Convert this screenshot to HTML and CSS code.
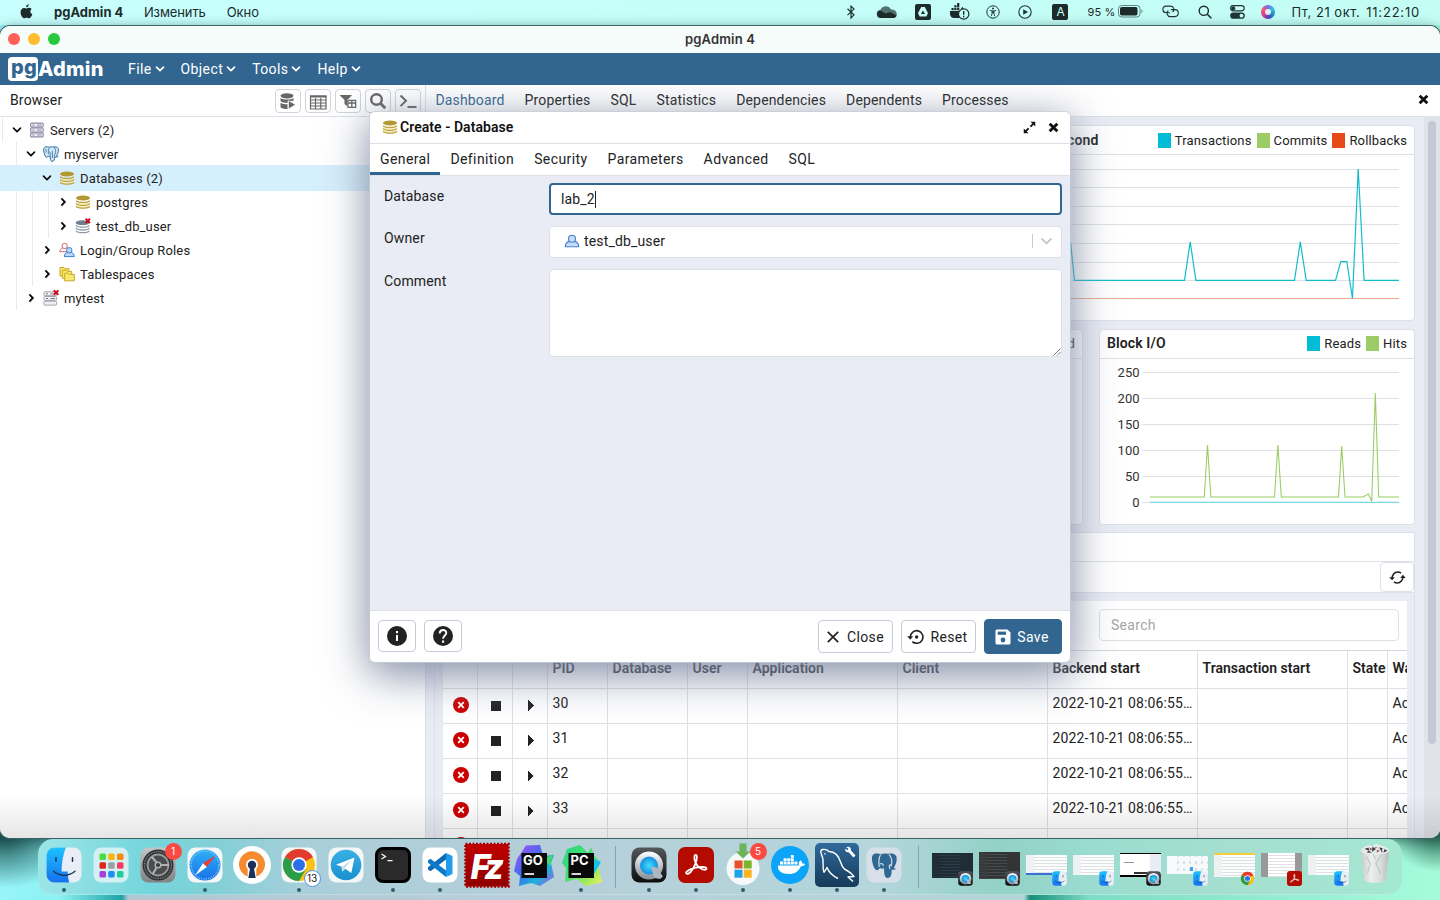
FILE: index.html
```html
<!DOCTYPE html>
<html lang="ru">
<head>
<meta charset="utf-8">
<title>pgAdmin 4</title>
<link rel="stylesheet" href="styles.css">
</head>
<body>
<svg class="defs" width="0" height="0">
  <defs>
    <linearGradient id="g-finder" x1="0" y1="0" x2="0" y2="1"><stop offset="0" stop-color="#1cc3ff"/><stop offset="1" stop-color="#1670f0"/></linearGradient>
    <linearGradient id="g-blue" x1="0" y1="0" x2="0" y2="1"><stop offset="0" stop-color="#2fb0f5"/><stop offset="1" stop-color="#1770e8"/></linearGradient>
    <linearGradient id="g-gray" x1="0" y1="0" x2="0" y2="1"><stop offset="0" stop-color="#c4c6c8"/><stop offset="1" stop-color="#7f8183"/></linearGradient>
    <linearGradient id="g-tg" x1="0" y1="0" x2="0" y2="1"><stop offset="0" stop-color="#38b0e3"/><stop offset="1" stop-color="#1b90cf"/></linearGradient>
    <linearGradient id="g-dark" x1="0" y1="0" x2="0" y2="1"><stop offset="0" stop-color="#55585c"/><stop offset="1" stop-color="#0c0c0e"/></linearGradient>
    <linearGradient id="g-sql" x1="0" y1="0" x2="0" y2="1"><stop offset="0" stop-color="#2f6a9c"/><stop offset="1" stop-color="#173a58"/></linearGradient>
    <linearGradient id="g-go" x1="0" y1="0" x2="1" y2="1"><stop offset="0" stop-color="#b74af7"/><stop offset=".45" stop-color="#3b6cf0"/><stop offset=".7" stop-color="#18b5d8"/><stop offset="1" stop-color="#b34de8"/></linearGradient>
    <linearGradient id="g-pc" x1="0" y1="0" x2="1" y2="1"><stop offset="0" stop-color="#20d788"/><stop offset=".5" stop-color="#4fe06a"/><stop offset="1" stop-color="#f6f550"/></linearGradient>
    <linearGradient id="g-silver" x1="0" y1="0" x2="0" y2="1"><stop offset="0" stop-color="#f4f6f8"/><stop offset="1" stop-color="#8f979f"/></linearGradient>
    <linearGradient id="g-fz" x1="0" y1="0" x2="0" y2="1"><stop offset="0" stop-color="#c20000"/><stop offset="1" stop-color="#8e0000"/></linearGradient>
    <radialGradient id="g-lens"><stop offset="0" stop-color="#3ee0ff"/><stop offset="1" stop-color="#0b76d8"/></radialGradient>
    <linearGradient id="g-trash" x1="0" y1="0" x2="1" y2="0"><stop offset="0" stop-color="#c6cac9"/><stop offset=".35" stop-color="#ecefee"/><stop offset=".7" stop-color="#d9dddb"/><stop offset="1" stop-color="#b7bcba"/></linearGradient>

    <symbol id="down" viewBox="0 0 10 10"><path d="M1.5 3.2 5 6.7l3.500-3.500" fill="none" stroke="currentColor" stroke-width="1.700" stroke-linecap="round" stroke-linejoin="round"/></symbol>
    <symbol id="right" viewBox="0 0 10 10"><path d="M3.400 1.400 6.800 5 3.400 8.600" fill="none" stroke="currentColor" stroke-width="1.900"/></symbol>
    <symbol id="cross" viewBox="0 0 10 10"><path d="M1.500 1.500l7 7M8.500 1.500l-7 7" fill="none" stroke="currentColor" stroke-width="2.600"/></symbol>
    <symbol id="kill" viewBox="0 0 16 16"><circle cx="8" cy="8" r="8" fill="#cc0000"/><path d="M5.200 5.200l5.600 5.600M10.800 5.200l-5.600 5.600" stroke="#fff" stroke-width="1.800"/></symbol>
    <symbol id="db" viewBox="0 0 16 16"><ellipse cx="8" cy="4" rx="7" ry="2.600" fill="#b39831"/><path d="M1.200 6.700c2 2.400 11.600 2.400 13.600 0M1.200 9.500c2 2.400 11.600 2.400 13.600 0M1.200 12.200c2 2.400 11.600 2.400 13.600 0" fill="none" stroke="#c0a53f" stroke-width="1.500"/><path d="M1.800 8.600c2 1.900 10.400 1.900 12.400 0M1.800 11.300c2 1.900 10.400 1.900 12.400 0" fill="none" stroke="#f5ecb4" stroke-width="1.100"/></symbol>
    <symbol id="db-off" viewBox="0 0 16 16"><ellipse cx="7.500" cy="4.700" rx="6.800" ry="2.400" fill="#6f7d8c"/><path d="M.9 7.400c2 2.400 11.400 2.400 13.400 0M.9 10.200c2 2.400 11.400 2.400 13.400 0M.9 12.900c2 2.400 11.400 2.400 13.400 0" fill="none" stroke="#8d99a6" stroke-width="1.300"/><path d="M10.600.7l4.400 4.200M15 .7l-4.400 4.200" stroke="#d0021b" stroke-width="1.900"/></symbol>
    <symbol id="servers" viewBox="0 0 16 16"><g fill="#eceaf3" stroke="#8e8aa6" stroke-width="1.100"><rect x="1.600" y="1.100" width="12.600" height="4" rx="1"/><rect x="1.600" y="6" width="12.600" height="4" rx="1"/><rect x="1.600" y="10.900" width="12.600" height="4" rx="1"/></g><path d="M3.300 3.100h2M3.300 8h2M3.300 12.900h2M8 3.100h4.500M8 8h4.500M8 12.900h4.500" stroke="#8e8aa6"/></symbol>
    <symbol id="server-off" viewBox="0 0 16 16"><g fill="#f1f1f3" stroke="#a3a3ab" stroke-width="1"><rect x="1" y="1.800" width="12.600" height="3.900" rx="1"/><rect x="1" y="6.500" width="12.600" height="3.900" rx="1"/><rect x="1" y="11.200" width="12.600" height="3.900" rx="1"/></g><path d="M3 3.800h2M3 8.500h2M7.500 8.500H12M7.500 3.800H10" stroke="#6d7797"/><path d="M10.800.3l4.600 4.400M15.400.3l-4.600 4.400" stroke="#d0021b" stroke-width="1.900"/></symbol>
    <symbol id="elephant" viewBox="0 0 16 16"><path d="M4.600.9C2 .3.400 1.700.6 4.200c.2 2.500 1.300 5.900 2.500 6.900.8.600 1.500-.2 2.100-.9.600.6 1.300.6 2 .3.200 1.700.1 4.700 1.900 4.900 2.200.1 2.300-1.900 2.500-4.600 1.100.5 2.900.3 3.600-.5-1.100.1-1.900-.1-1.600-.7 1.500-2.200 2.600-5.800 1.600-7.300C14.200.9 12.300.6 10.900 1 9 .5 7.600.6 6.600 1.300 6 1.100 5.300.9 4.600.9z" fill="#cfe6f5" stroke="#2f6f9f" stroke-width="1"/><path d="M6.600 1.300c-1.500 2-1.300 5-1.100 7M10.900 1c1.700 1.700 2.300 4.600 1.300 7.200M5.700 6.200c1.200-.6 1.800.3 1.700 1.200-.1 1.200-.6 1.800-.2 3.100M9.400 4.800v7.200M12.200 8.200c-1 .5-.9 1.500-.6 2.600M3 3v3.500" fill="none" stroke="#2f6f9f" stroke-width=".8"/></symbol>
    <symbol id="user" viewBox="0 0 16 16"><path d="M1.300 13.700c0-3 1.700-4.700 4-5.300h5.400c2.300.6 4 2.300 4 5.300z" fill="#c3dcf7" stroke="#4a80d0" stroke-width="1.100"/><circle cx="8" cy="5.700" r="3.500" fill="#c3dcf7" stroke="#4a80d0" stroke-width="1.100"/></symbol>
    <symbol id="roles" viewBox="0 0 17 16"><path d="M.9 9.800c0-2.300 1.400-3.600 3.200-4.100h4.200c1.700.5 2.500 1.800 2.500 4.100z" fill="#fff" stroke="#cf5a5f"/><circle cx="6" cy="3.700" r="2.800" fill="#fff" stroke="#cf5a5f"/><path d="M5.600 15c0-2.700 1.500-4 3.300-4.500h4c1.900.5 3.300 1.800 3.300 4.500z" fill="#b9dafa" stroke="#3576cf"/><circle cx="10.900" cy="8.300" r="2.900" fill="#b9dafa" stroke="#3576cf"/></symbol>
    <symbol id="folders" viewBox="0 0 16 16"><g fill="#f6e96b" stroke="#c9a923"><path d="M1 1.500h4l1 1.200h4V10H1z"/><path d="M3.300 4.200h4l1 1.200h4.400v7H3.300z"/><path d="M5.700 7.200h3.600l1 1.200h5v6.400H5.700z"/></g></symbol>

    <symbol id="finder" viewBox="0 0 36 36"><rect x=".5" y=".5" width="35" height="35" rx="8" fill="#e8edf6"/><path d="M20 .5H8.500a8 8 0 0 0-8 8v19a8 8 0 0 0 8 8h14.800c-1-3.600-1.600-7-1.700-11h-6C15.700 16.200 17.200 7 20 .5z" fill="url(#g-finder)"/><path d="M10 10.700v3.500M26.500 10.700v3.500" stroke="#1b3450" stroke-width="1.500" stroke-linecap="round"/><path d="M7.500 24.300c6 5.300 15.500 5.300 21.500 0" fill="none" stroke="#1b3450" stroke-width="1.300" stroke-linecap="round"/></symbol>
    <symbol id="quick" viewBox="0 0 36 36"><rect x=".5" y=".5" width="35" height="35" rx="8" fill="url(#g-dark)"/><circle cx="18" cy="18.500" r="11.500" fill="url(#g-lens)" stroke="url(#g-silver)" stroke-width="5"/><path d="M19.500 19.500l6 1 6.500 9-3 2.500-5.500-1z" fill="#aeb8c2"/></symbol>
    <symbol id="chrome" viewBox="0 0 36 36"><circle cx="18" cy="18" r="16" fill="#fbc116"/><path d="M18 18 4.100 10A16 16 0 0 1 31.900 10z" fill="#e33b2e"/><path d="M18 18 4.100 10A16 16 0 0 0 18 34l7-12z" fill="#2a9c4a"/><path d="M31.900 10H18v5z" fill="#e33b2e"/><circle cx="18" cy="18" r="7.700" fill="#fff"/><circle cx="18" cy="18" r="6" fill="#2b6fe8"/></symbol>
    <symbol id="acrobat" viewBox="0 0 36 36"><rect width="36" height="36" rx="7" fill="#b30b00"/><path d="M8.500 26.500c-1.500-1 1.500-4 8-5.600 5-1.300 11.500-1.300 12 .6.300 1.800-3.500 1.900-7-.9-3.700-2.900-5.800-8.300-5-11.300.5-2 2.200-1.700 2.400.3.400 4-3 11.500-6.200 15.200-1.700 2-3.300 2.400-4.200 1.700z" fill="none" stroke="#fff" stroke-width="1.800"/></symbol>
  </defs>
</svg>

<div class="desktop">
  <header class="menubar">
    <svg class="apple" viewBox="0 0 14 16"><path d="M9.500.300c.1 1.600-1.300 3.200-2.900 3.100C6.400 1.900 7.900.4 9.500.3zM12.700 5.300c-2.300 1.500-1.900 4.500.6 5.600-.7 1.900-2.200 4.500-3.600 4.500-1 0-1.400-.6-2.500-.6s-1.600.6-2.500.6C2.900 15.400.600 11.900.600 8.800c0-3 1.800-4.700 3.700-4.700 1.200 0 2.100.7 2.800.7s1.800-.8 3.200-.7c.900 0 1.900.4 2.400 1.200z" fill="#1d2b2b"/></svg>
    <b class="mb-app">pgAdmin 4</b><span class="mb-item">Изменить</span><span class="mb-item">Окно</span>
    <div class="tray">
      <svg width="10" height="16" viewBox="0 0 10 16"><path d="M1.500 4.800l6.500 6L5 13.900V2.100l3 3-6.500 6" fill="none" stroke="#1f3434" stroke-width="1.200"/></svg>
      <svg width="22" height="16" viewBox="0 0 22 16"><path d="M5 14a4 4 0 0 1-.6-8C6 1.600 12.500.8 15 5.400c3.500 0 5.800 2 5.800 4.800 0 2.200-1.500 3.800-3.700 3.800z" fill="#54716f"/><path d="M5 14a4 4 0 0 1-1-7.800l6 3.400L14 8l6.600 3.500c-.5 1.600-1.800 2.500-3.500 2.500z" fill="#1d2b2b"/></svg>
      <svg width="16" height="16" viewBox="0 0 16 16"><rect width="16" height="16" rx="2" fill="#1d2b2b"/><path d="M6.200 3h3.600L13 9.300 11.300 12.500H4.700L3 9.300z" fill="#c5fff8"/><path d="M8 6.500 10 10H6z" fill="#1d2b2b"/></svg>
      <svg width="21" height="17" viewBox="0 0 21 17"><path d="M1 8h12.500l-3 7H5C2 15 .500 12 1 8zM2.500 5h2.200v2.200H2.500zM5.300 5h2.200v2.200H5.300zM8.100 5h2.200v2.200H8.100zM5.300 2.200h2.200v2.200H5.300zM8.100-.1h2.200v4.500H8.100zM12 7c0-2 1-3 2-3v4h-2z" fill="#1d2b2b"/><circle cx="14.700" cy="11" r="5.200" fill="#c5fff8" stroke="#1d2b2b" stroke-width="1.200"/><path d="M14.700 8v3.700M14.700 12.800v1.400" stroke="#1d2b2b" stroke-width="1.400"/></svg>
      <svg width="14" height="14" viewBox="0 0 14 14"><circle cx="7" cy="7" r="6.200" fill="none" stroke="#1f3434"/><circle cx="7" cy="3.500" r="1" fill="#1f3434"/><path d="M3.800 5.400l2.400.5v1.800L5.400 11.200M10.200 5.400l-2.400.5v1.800l.8 3.500M6.200 5.900h1.600v2H6.200z" fill="none" stroke="#1f3434" stroke-width=".9"/></svg>
      <svg width="14" height="14" viewBox="0 0 14 14"><circle cx="7" cy="7" r="6.200" fill="none" stroke="#1f3434" stroke-width="1.100"/><path d="M5.200 4.200 10 7l-4.800 2.800z" fill="#1f3434"/></svg>
      <span class="lang">A</span>
      <span class="pct">95 %</span>
      <svg class="batt" width="26" height="13" viewBox="0 0 26 13"><rect x=".5" y=".5" width="21.500" height="11.500" rx="3.200" fill="none" stroke="#5f8583"/><rect x="2" y="2" width="17.500" height="8.500" rx="1.800" fill="#1d2b2b"/><path d="M23.400 4.300c1.500.5 1.500 3.500 0 4z" fill="#5f8583"/></svg>
      <svg class="link" width="19" height="13" viewBox="0 0 19 13"><path d="M9 7.700H5.200a3.300 3.300 0 0 1 0-6.600h4.500a3.300 3.300 0 0 1 1.800 6M9.800 4.600h4a3.500 3.500 0 0 1 0 7H9.300a3.400 3.400 0 0 1-2-6.100" fill="none" stroke="#1f3434" stroke-width="1.100"/></svg>
      <svg class="mag" width="14" height="14" viewBox="0 0 14 14"><circle cx="5.800" cy="5.800" r="4.600" fill="none" stroke="#1d2b2b" stroke-width="1.400"/><path d="M9.300 9.300l4 4" stroke="#1d2b2b" stroke-width="1.600"/></svg>
      <svg class="cc" width="15" height="14" viewBox="0 0 15 14"><rect x=".6" y=".6" width="13.600" height="5.300" rx="2.600" fill="none" stroke="#1f3434" stroke-width="1.100"/><circle cx="3.300" cy="3.300" r="2" fill="#1f3434"/><rect x=".2" y="7.600" width="14.600" height="6.200" rx="3.100" fill="#1f3434"/><circle cx="11.500" cy="10.700" r="1.900" fill="#c5fff8"/></svg>
      <span class="siri"><i></i></span>
      <span class="date">Пт, 21 окт.</span><span class="time">11:22:10</span>
    </div>
  </header>

  <main class="window">
    <div class="titlebar"><div class="lights"><i class="r"></i><i class="y"></i><i class="g"></i></div><b>pgAdmin 4</b></div>
    <nav class="appbar">
      <div class="logo"><span class="pg">pg</span><span>Admin</span></div>
      <span class="menu">File<svg><use href="#down"/></svg></span>
      <span class="menu">Object<svg><use href="#down"/></svg></span>
      <span class="menu">Tools<svg><use href="#down"/></svg></span>
      <span class="menu">Help<svg><use href="#down"/></svg></span>
    </nav>

    <div class="panes">
      <section class="browser">
        <div class="pane-head">
          <span>Browser</span>
          <div class="tools">
            <i><svg viewBox="0 0 18 18"><g fill="#666"><ellipse cx="8" cy="3.800" rx="6.500" ry="2.600"/><path d="M1.500 6c2.500 2 10.500 2 13 0v2.700l-6 .500v1.800C5 11 2.500 10.300 1.500 9zM1.500 10.700c1.700 1.200 4 1.500 7 1.500V17c-4 0-6-.6-7-1.800z"/><path d="M9.500 8.500l7 4.200-7 4.200z" stroke="#fff" stroke-width=".6"/></g></svg></i>
            <i><svg viewBox="0 0 18 18"><path d="M1.500 4h15.500v13H1.500zM1.500 8h15.500M1.500 11h15.500M1.500 14h15.500M6.500 6v11M11.800 6v11" fill="none" stroke="#666" stroke-width="1.200"/><path d="M1 3.400h16.500v2.200H1z" fill="#666"/></svg></i>
            <i><svg viewBox="0 0 18 18"><path d="M.5 3h12.500L8.500 8v6.500L5.500 12V8z" fill="#666"/><path d="M8.500 7.500h8.500v8H8.500z" fill="#fff"/><path d="M9 8.400h7.600v7H9zM9 11h7.600M12.800 9v6.400" fill="none" stroke="#666" stroke-width="1.300"/></svg></i>
            <i><svg viewBox="0 0 18 18"><circle cx="7.500" cy="7.500" r="5.300" fill="none" stroke="#666" stroke-width="2.400"/><path d="M11.300 11.300l5 5" stroke="#666" stroke-width="3"/></svg></i>
            <i><svg viewBox="0 0 18 18"><path d="M1.500 3.500l5.500 5.300-5.500 5.300M8.500 15h9" fill="none" stroke="#666" stroke-width="2"/></svg></i>
          </div>
        </div>
        <div class="tree">
          <div class="row d0"><svg class="tw"><use href="#down"/></svg><svg class="ic"><use href="#servers"/></svg><span>Servers (2)</span></div>
          <div class="g1">
            <div class="row d1"><svg class="tw"><use href="#down"/></svg><svg class="ic"><use href="#elephant"/></svg><span>myserver</span></div>
            <div class="row d2 sel"><svg class="tw"><use href="#down"/></svg><svg class="ic"><use href="#db"/></svg><span>Databases (2)</span></div>
            <div class="row d3"><svg class="tw"><use href="#right"/></svg><svg class="ic"><use href="#db"/></svg><span>postgres</span></div>
            <div class="row d3"><svg class="tw"><use href="#right"/></svg><svg class="ic"><use href="#db-off"/></svg><span>test_db_user</span></div>
            <div class="row d2"><svg class="tw"><use href="#right"/></svg><svg class="ic"><use href="#roles"/></svg><span>Login/Group Roles</span></div>
            <div class="row d2"><svg class="tw"><use href="#right"/></svg><svg class="ic"><use href="#folders"/></svg><span>Tablespaces</span></div>
            <div class="row d1"><svg class="tw"><use href="#right"/></svg><svg class="ic"><use href="#server-off"/></svg><span>mytest</span></div>
          </div>
        </div>
      </section>

      <section class="content">
        <div class="tabs">
          <span class="on">Dashboard</span><span>Properties</span><span>SQL</span><span>Statistics</span><span>Dependencies</span><span>Dependents</span><span>Processes</span>
          <svg class="close"><use href="#cross"/></svg>
        </div>
        <div class="scroller">
          <div class="dash">
            <div class="cards two">
              <article class="card"></article>
              <article class="card">
                <div class="card-head"><b>Transactions per second</b><div class="legend"><i class="c1"></i>Transactions<i class="c2"></i>Commits<i class="c3"></i>Rollbacks</div></div>
                <svg class="chart" viewBox="934 155 480 165"><path d="M960 169.500h439M960 187.500h439M960 206.500h439M960 224.500h439M960 243.500h439M960 262.500h439M960 280.500h439M960 298.500h439" stroke="#dfe1e6"/><path d="M960 298.500h439" stroke="#f0a58c"/><path d="M960 280.300h104.500l6-38.500 4 38.500h110l5.700-38.500 5.700 38.500h98.600l5.800-38.500 5.900 38.500h29.300l5.300-18.600h6l5.700 36.700 5.700-129.400 5.900 111.300H1399" fill="none" stroke="#12bccb" stroke-width="1.200"/></svg>
              </article>
            </div>
            <div class="cards three">
              <article class="card"></article>
              <article class="card"><div class="card-head"><b></b><div class="legend"><i class="c2"></i>Returned</div></div></article>
              <article class="card">
                <div class="card-head"><b>Block I/O</b><div class="legend"><i class="c1"></i>Reads<i class="c2"></i>Hits</div></div>
                <svg class="chart" viewBox="1100 358 314 165"><path d="M1142.500 372.500H1399M1142.500 398.500H1399M1142.500 424.500H1399M1142.500 450.500H1399M1142.500 476.500H1399M1142.500 502.500H1399" stroke="#dfe1e6"/><g class="axis" text-anchor="end"><text x="1139.500" y="377">250</text><text x="1139.500" y="403">200</text><text x="1139.500" y="429">150</text><text x="1139.500" y="455">100</text><text x="1139.500" y="480.500">50</text><text x="1139.500" y="506.500">0</text></g><path d="M1150 502.300H1399" stroke="#79d8e2" stroke-width="1.300"/><path d="M1150 497h54.300l3.200-52 3.300 52h63.700l3.400-52 3.400 52h57.200l3.200-51 3.300 51h18l5.500-3 3.200 7.500 3.600-108.500 3.400 104H1399" fill="none" stroke="#9ccc65" stroke-width="1.100"/></svg>
              </article>
            </div>
            <div class="activity">
              <div class="act-title"></div>
              <div class="act-tabs"><span class="refresh"><svg viewBox="0 0 18 16"><path d="M3.200 9.500C3 5.500 5.800 2.200 9.200 2.200c1.400 0 2.600.4 3.600 1.100M14.800 6.500c.2 4-2.600 7.300-6 7.300-1.400 0-2.600-.4-3.600-1.100" fill="none" stroke="#222" stroke-width="1.700"/><path d="M.2 7.600h6l-3 3.400zM11.800 8.400l3-3.400 3 3.400z" fill="#222"/></svg></span></div>
              <div class="grid-box">
                <div class="search-row"><span class="search">Search</span></div>
                <div class="tr th"><i></i><i></i><i></i><i>PID</i><i>Database</i><i>User</i><i>Application</i><i>Client</i><i>Backend start</i><i>Transaction start</i><i>State</i><i>Wait</i></div>
                <div class="tr"><i class="kill"><svg><use href="#kill"/></svg></i><i class="stop"></i><i class="play"></i><i>30</i><i></i><i></i><i></i><i></i><i>2022-10-21 08:06:55…</i><i></i><i></i><i>Act</i></div>
                <div class="tr"><i class="kill"><svg><use href="#kill"/></svg></i><i class="stop"></i><i class="play"></i><i>31</i><i></i><i></i><i></i><i></i><i>2022-10-21 08:06:55…</i><i></i><i></i><i>Act</i></div>
                <div class="tr"><i class="kill"><svg><use href="#kill"/></svg></i><i class="stop"></i><i class="play"></i><i>32</i><i></i><i></i><i></i><i></i><i>2022-10-21 08:06:55…</i><i></i><i></i><i>Act</i></div>
                <div class="tr"><i class="kill"><svg><use href="#kill"/></svg></i><i class="stop"></i><i class="play"></i><i>33</i><i></i><i></i><i></i><i></i><i>2022-10-21 08:06:55…</i><i></i><i></i><i>Act</i></div>
                <div class="tr"><i class="kill"><svg><use href="#kill"/></svg></i><i></i><i></i><i></i><i></i><i></i><i></i><i></i><i></i><i></i><i></i><i></i></div>
              </div>
            </div>
          </div>
          <div class="track"><div class="thumb"></div></div>
        </div>
      </section>
    </div>
    <div class="shade"></div>
  </main>

  <div class="halo"></div>
  <div class="dialog">
    <div class="dlg-head"><svg class="ic"><use href="#db"/></svg><b>Create - Database</b>
      <svg class="max" viewBox="0 0 14 14"><path d="M8 .8h5.200V6zM6 13.200H.8V8z" fill="#111"/><path d="M3 11l3-3M8 6l3-3" stroke="#111" stroke-width="2"/></svg>
      <svg class="x"><use href="#cross"/></svg></div>
    <div class="dlg-tabs"><span class="on">General</span><span>Definition</span><span>Security</span><span>Parameters</span><span>Advanced</span><span>SQL</span></div>
    <div class="form">
      <label class="first">Database</label><div class="input focus">lab_2<i class="caret"></i></div>
      <label>Owner</label><div class="input select"><svg class="ic"><use href="#user"/></svg><span>test_db_user</span><svg class="arrow" viewBox="0 0 12 12"><path d="M1 3.500l5 5 5-5" fill="none" stroke="#c8c8c8" stroke-width="1.800"/></svg></div>
      <label>Comment</label><div class="input area"><svg class="grip" viewBox="0 0 8 8"><path d="M.5 7.500l7-7M4 7.500l3.500-3.500" stroke="#666" stroke-width=".9"/></svg></div>
    </div>
    <div class="dlg-foot">
      <span class="sq"><svg viewBox="0 0 20 20"><circle cx="10" cy="10" r="10" fill="#222"/><path d="M10 9v6M10 5v2.200" stroke="#fff" stroke-width="2"/></svg></span>
      <span class="sq"><svg viewBox="0 0 20 20"><circle cx="10" cy="10" r="10" fill="#222"/><path d="M6.700 7.500C6.700 2.700 13.300 3 13.300 7c0 2.500-3.200 2.700-3.200 5.700" fill="none" stroke="#fff" stroke-width="1.900"/><path d="M10.100 14.500v2.200" stroke="#fff" stroke-width="2.100"/></svg></span>
      <span class="btn first"><svg width="12" height="12" viewBox="0 0 12 12"><path d="M.8.800l10.400 10.400M11.200.8.800 11.200" stroke="#222" stroke-width="1.700"/></svg>Close</span>
      <span class="btn reset"><svg width="17" height="16" viewBox="0 0 17 16"><path d="M3.300 8a6.300 6.300 0 1 1 2 4.600" fill="none" stroke="#222" stroke-width="1.600"/><path d="M.2 7.200h6L3.200 10.700z" fill="#222"/><circle cx="9.600" cy="8" r="1.700" fill="#222"/></svg>Reset</span>
      <span class="btn save"><svg width="16" height="16" viewBox="0 0 16 16"><path d="M2 .5h10.500L15.500 3.500V14a1.500 1.500 0 0 1-1.500 1.500H2A1.500 1.500 0 0 1 .5 14V2A1.500 1.500 0 0 1 2 .5z" fill="#fff"/><path d="M2.700 2.600h8.300v3.200H2.700z" fill="#326690"/><circle cx="8" cy="11" r="2.400" fill="#326690"/></svg>Save</span>
    </div>
  </div>

  <footer class="dock">
    <span class="app run"><svg><use href="#finder"/></svg></span>
    <span class="app"><svg viewBox="0 0 36 36"><rect x=".5" y=".5" width="35" height="35" rx="8" fill="#d3f0f2"/><g><rect x="6.500" y="6.500" width="6.500" height="6.500" rx="1.500" fill="#4ddb3c"/><rect x="15.200" y="6.500" width="6.500" height="6.500" rx="1.500" fill="#fbb70b"/><rect x="24" y="6.500" width="6.500" height="6.500" rx="1.500" fill="#f98a0b"/><rect x="6.500" y="15.200" width="6.500" height="6.500" rx="1.500" fill="#e0251b"/><rect x="15.200" y="15.200" width="6.500" height="6.500" rx="1.500" fill="#9b9fa2"/><rect x="24" y="15.200" width="6.500" height="6.500" rx="1.500" fill="#fb3c62"/><rect x="6.500" y="24" width="6.500" height="6.500" rx="1.500" fill="#a33fdc"/><rect x="15.200" y="24" width="6.500" height="6.500" rx="1.500" fill="#1e8ff5"/><rect x="24" y="24" width="6.500" height="6.500" rx="1.500" fill="#1fcb9b"/></g></svg></span>
    <span class="app"><svg viewBox="0 0 36 36"><rect x=".5" y=".5" width="35" height="35" rx="8" fill="url(#g-gray)"/><circle cx="18" cy="18" r="15.500" fill="#2f3133"/><circle cx="18" cy="18" r="13.500" fill="none" stroke="#85878a" stroke-width="1.300" stroke-dasharray="1 .8"/><circle cx="18" cy="18" r="10.500" fill="#4a4c4e" stroke="#97999b" stroke-width="1.800"/><circle cx="18" cy="18" r="2.800" fill="#3a3c3e" stroke="#b0b2b4" stroke-width="1.500"/><path d="M16.600 15.500 11.500 9.500M21 18h8M16.600 20.500l-3.800 6.500" stroke="#b0b2b4" stroke-width="2"/></svg><em class="badge">1</em></span>
    <span class="app run"><svg viewBox="0 0 36 36"><rect x=".5" y=".5" width="35" height="35" rx="8" fill="#f4f6f8"/><circle cx="18" cy="18" r="15.500" fill="url(#g-blue)"/><circle cx="18" cy="18" r="14" fill="none" stroke="#9bd4fa" stroke-width="1.800" stroke-dasharray=".6 1.200"/><path d="M28.500 8.500 19.800 20 16 16.200z" fill="#f03b30"/><path d="M8 28.500 16 16.200 19.800 20z" fill="#fff"/></svg></span>
    <span class="app"><svg viewBox="0 0 36 36"><circle cx="18" cy="18" r="19" fill="#fff"/><path d="M13.700 29.500a13 13 0 1 1 8.600 0V22a6 6 0 1 0-8.600 0z" fill="#f58b2e"/><circle cx="18" cy="18" r="4.200" fill="#1c2f5a"/><path d="M16.300 20h3.400l2 11h-7.400z" fill="#1c2f5a"/></svg></span>
    <span class="app run"><svg viewBox="0 0 36 36"><rect x=".5" y=".5" width="35" height="35" rx="8" fill="#f6f7f8"/><use href="#chrome" width="36" height="36"/></svg><em class="badge ring">13</em></span>
    <span class="app"><svg viewBox="0 0 36 36"><rect x=".5" y=".5" width="35" height="35" rx="8" fill="#f4f7f8"/><circle cx="18" cy="18" r="15.300" fill="url(#g-tg)"/><path d="M8 17.700 26.500 10.500 23.300 26l-6-4.300-3 2.800-.8-5z" fill="#fff"/><path d="M13.800 20 24 12.500l-7 8.200-2.500 3.500z" fill="#c3dff0"/></svg></span>
    <span class="app run"><svg viewBox="0 0 36 36"><rect x="1.500" y="1.500" width="33" height="33" rx="6.500" fill="#2a2a2a" stroke="#000" stroke-width="3"/><path d="M6.500 7l4 2.500-4 2.500M12.500 13.700h5" fill="none" stroke="#fff" stroke-width="1.200"/></svg></span>
    <span class="app run"><svg viewBox="0 0 36 36"><rect x=".5" y=".5" width="35" height="35" rx="8" fill="#fff"/><path d="M24 6 30.500 9v18L24 30z" fill="#1f9cf0"/><path d="M24 6v6.500L8.500 24.300 6 22.500v-2.200z" fill="#0f6ab4"/><path d="M24 30v-6.500L8.500 11.700 6 13.500v2.200z" fill="#0a7acb"/></svg></span>
    <span class="app"><svg viewBox="0 0 36 36"><rect x="-3.500" y="-3" width="43" height="42.500" fill="url(#g-fz)" stroke="#a80000" stroke-width="2.500" stroke-dasharray="2 1.500"/><text x="1.500" y="32" class="fz">Fz</text></svg></span>
    <span class="app"><svg viewBox="0 0 36 36"><path d="M10-1.500 24-2l3 11 11-1-3 8 3 14-14 9-9-3-12 3 1-10-6-5 3-12z" fill="url(#g-go)"/><path d="M28 12l9-5-3 12z" fill="#3ddc6c"/><rect x="5.500" y="6" width="25.500" height="25" fill="#0a0a0a"/><text x="7" y="18" class="jb">GO</text><path d="M8.500 27h9.500" stroke="#fff" stroke-width="1.700"/></svg></span>
    <span class="app run"><svg viewBox="0 0 36 36"><path d="M4 2 17-2l8 8 3-6 3 8 6 7-2 4 4 16-17 4-8-7-12 3 1-14-4-5z" fill="url(#g-pc)"/><path d="M30 11l8 4-7 12z" fill="#12c4e8"/><rect x="5.500" y="6" width="25.500" height="25" fill="#0a0a0a"/><text x="7.500" y="18" class="jb">PC</text><path d="M8.500 27h9.500" stroke="#fff" stroke-width="1.700"/></svg></span>
    <span class="sep"></span>
    <span class="app run"><svg><use href="#quick"/></svg></span>
    <span class="app run"><svg><use href="#acrobat"/></svg></span>
    <span class="app run"><svg viewBox="0 0 36 36"><circle cx="18" cy="21.500" r="16.500" fill="#f7f8f8"/><path d="M9.500 13.500h8v8h-8z" fill="#e8502b"/><path d="M18.700 13.500h8v8h-8z" fill="#7db52b"/><path d="M9.500 22.700h8v8h-8z" fill="#1fa3e8"/><path d="M18.700 22.700h8v8h-8z" fill="#fbb51a"/><path d="M14.500-3.500h7v8h4l-7.500 7-7.500-7h4z" fill="#6db35c"/></svg><em class="badge">5</em></span>
    <span class="app run"><svg viewBox="0 0 36 36"><circle cx="18" cy="18" r="19" fill="#0ba4f8"/><path d="M6 18.500h21c-.8-2 .1-4.300 1.500-5.300 1.200 1 1.700 2 1.700 3.200 1 0 2 0 3 .6-.8 1.800-2.500 2.300-4.200 2.200C26.500 24.500 22.500 27 17 27 9.500 27 5.500 24 6 18.500zM8 14.500h3v3H8zM11.600 14.500h3v3h-3zM15.200 14.500h3v3h-3zM18.800 14.500h3v3h-3zM22.400 14.500h3v3h-3zM11.600 11.200h3v2.800h-3zM15.200 11.200h3v2.800h-3zM18.800 11.200h3v2.800h-3zM18.800 8h3v2.700h-3z" fill="#fff"/></svg></span>
    <span class="app run"><svg viewBox="0 0 36 36"><rect x="-4" y="-4" width="44" height="44" rx="5" fill="url(#g-sql)"/><path d="M5 25.500C2.500 19 6 14 2.500 7.500 1.500 5.500 1.500 3 3.500 2.500 6 2 8.500 3 10 4.500c6 0 10 5 12 11.500 1 3.500 2.500 6 6 7.500 3 1.500 5 3.500 7 6l-6 .5 5 4.500M5 25.500l3-5c2 5.500 6 8.500 11 11M5.500 6.500l1 .5" fill="none" stroke="#fff" stroke-width="1.400" stroke-linejoin="round"/><path d="M29.500 3l6 6.500" stroke="#fff" stroke-width="2.800"/><circle cx="29" cy="2.500" r="2.800" fill="#fff"/><path d="M26 .5l3 2" stroke="#2d6593" stroke-width="1.800"/></svg></span>
    <span class="app run"><svg viewBox="0 0 36 36"><rect x=".5" y=".5" width="35" height="35" rx="8" fill="#d7dfe8"/><path d="M11 6.500c-4-.3-5.500 2.500-5 6.500.5 4 2 8.500 4 10 1.500.8 3-.5 4-2 1 .8 2.500.8 4 .2.200 4 0 9.500 3.500 9.800 4 0 4-4 4.200-8.500 1.500.5 3.500.2 4.500-.8-1.500 0-2.500-.5-2-1.500 2.300-3.500 3.300-9 1.800-11.500-2-2.500-5.500-2.500-8-1.800-3-.8-5.500-.5-7 .6-1.200-.6-2.500-1-4-1z" fill="#2f6793"/><path d="M14.500 8c-2 3-1.800 8-1.300 12M23 7.500c3 2.500 3.500 8 2 12M14 17c2-1 3.500 0 3 2M25.500 17.500c-2 0-3 1-1.500 4.500" fill="none" stroke="#d7dfe8" stroke-width="1.200"/></svg></span>
    <span class="sep"></span>
    <span class="app mini"><span class="thumbnail code navy"></span><svg><use href="#quick"/></svg></span>
    <span class="app mini"><span class="thumbnail code"></span><svg><use href="#quick"/></svg></span>
    <span class="app mini"><span class="thumbnail list bluefoot"></span><svg><use href="#finder"/></svg></span>
    <span class="app mini"><span class="thumbnail list"></span><svg><use href="#finder"/></svg></span>
    <span class="app mini"><span class="thumbnail slide"></span><svg><use href="#quick"/></svg></span>
    <span class="app mini"><span class="thumbnail dots"></span><svg><use href="#finder"/></svg></span>
    <span class="app mini"><span class="thumbnail list yellow"></span><svg><use href="#chrome"/></svg></span>
    <span class="app mini"><span class="thumbnail doc"></span><svg><use href="#acrobat"/></svg></span>
    <span class="app mini"><span class="thumbnail list"></span><svg><use href="#finder"/></svg></span>
    <span class="app"><svg class="trash" viewBox="0 0 36 44"><path d="M3 7.500h30L29.500 39c-.3 4-22.700 4-23 0z" fill="url(#g-trash)"/><path d="M9 14l4 8-3 10M25 12l-6 9 5 12M15 10l4 7" fill="none" stroke="#c4c8c6" stroke-width="1.300"/><path d="M4 8.500 6.500 4l4-2 4.500 1 4-2.500 5 2 4.500 1L32 8l-4 2.500-10 1-11-1z" fill="#e6e8e8"/><path d="M7 6l4-2 1 4zM15 3l4 3-4 3zM22 4l4 1-1 4zM28 6l3 2-4 2zM11 8l4 2H9z" fill="#3c4147"/><path d="M12 4l3 2-2 2zM20 7l3 1-3 2z" fill="#a0524a"/><path d="M18 3l3 2h-3zM25 8l2 1-2 1z" fill="#4a78a8"/><ellipse cx="18" cy="7.500" rx="15" ry="3.800" fill="none" stroke="#eef1f0" stroke-width="1"/></svg></span>
  </footer>
</div>
</body>
</html>
```

FILE: styles.css
```css
* { box-sizing: border-box; }
body { margin: 0; font-family: Roboto, sans-serif; font-size: 14px; letter-spacing: .15px; color: #222; }
i, em { font-style: normal; }
b { font-weight: 600; }
.defs { position: absolute; }

.desktop {
  position: relative; width: 1440px; height: 900px; overflow: hidden;
  display: flex; flex-direction: column;
  background:
    radial-gradient(ellipse 80px 50px at 0 838px, #1e5656 0, rgba(50,130,130,0) 100%),
    radial-gradient(ellipse 50px 36px at 1440px 836px, #2a6f58 0, rgba(60,150,120,0) 100%),
    linear-gradient(90deg, #97f5fa 0, #8df0f2 60px, #1da3a5 122px, #b3c7d3 128px, #b6ced9 500px, #b3d5d8 1024px, #138f7a 1030px, #7fdcc6 1090px, #a6fbdc 1440px);
}

.menubar { height: 25px; display: flex; align-items: center; padding: 0 20px 2px; background: linear-gradient(90deg, #c8fffe, #c3fdf4); font-family: Inter, sans-serif; font-size: 13px; color: #1d2b2b; letter-spacing: -.1px; }
.apple { width: 13px; height: 15px; margin-right: 21px; }
.mb-app { font-weight: 700; margin-right: 20.500px; letter-spacing: 0; }
.mb-item { margin-right: 21px; }
.tray { margin-left: auto; display: flex; align-items: center; }
.tray > * { flex: none; }
.tray > svg { margin-right: 20px; }
.tray > svg:nth-child(2) { margin-right: 17px; }
.tray > svg:nth-child(3) { margin-right: 18px; }
.tray > svg:nth-child(4) { margin-right: 16px; }
.tray > svg:nth-child(5) { margin-right: 18px; }
.lang { width: 16px; height: 16px; border-radius: 2px; background: #1d2b2b; color: #c5fff8; font-size: 12px; line-height: 16px; text-align: center; margin-right: 19px; }
.pct { font-size: 11px; width: 27px; margin-right: 4px; white-space: nowrap; letter-spacing: .1px; }
.tray > .batt { margin-right: 17px; }
.tray > .link { margin-right: 18px; }
.tray > .mag { margin-right: 18px; }
.tray > .cc { margin-right: 16px; }
.siri { width: 14px; height: 14px; border-radius: 50%; background: conic-gradient(#7b6cf0, #30c4e0, #1a8ac0, #5c3fc0, #e0408c, #f05a6e, #7b6cf0); display: flex; align-items: center; justify-content: center; margin-right: 16px; }
.siri i { width: 6px; height: 6px; border-radius: 50%; background: #fff; opacity: .85; }
.date { margin-right: 6px; letter-spacing: .5px; }
.time { letter-spacing: .8px; }

.window { position: relative; margin-top: 1px; height: 812px; border-radius: 10px; overflow: hidden; display: flex; flex-direction: column; background: #fff; box-shadow: 0 0 0 1px #3c6363, 0 3px 14px rgba(0,40,40,.6); }
.titlebar { height: 27px; flex: none; background: #f6fcfa; display: grid; grid-template-columns: 100px 1fr 100px; align-items: center; font-family: Inter, sans-serif; font-size: 13px; text-align: center; color: #333; letter-spacing: .15px; }
.titlebar b { padding-bottom: 2px; }
.lights { display: flex; gap: 8px; padding: 0 0 1px 8px; }
.lights i { width: 12px; height: 12px; border-radius: 50%; }
.r { background: #fe5f57; } .y { background: #febc2e; } .g { background: #28c840; }
.appbar { height: 32px; flex: none; background: #326690; color: #fff; display: flex; align-items: center; padding-left: 8px; letter-spacing: .4px; }
.logo { display: flex; align-items: center; width: 120px; font: 800 20px/24px Inter, sans-serif; letter-spacing: .25px; }
.pg { background: #fff; color: #326690; border-radius: 4px; padding: 0 1px 0 3px; height: 24px; line-height: 21px; }
.menu { display: flex; align-items: center; gap: 3px; margin-right: 16px; }
.menu svg { width: 10px; height: 10px; }

.panes { flex: 1; min-height: 0; display: flex; }
.browser { width: 425px; flex: none; display: flex; flex-direction: column; background: #fff; }
.pane-head { height: 32px; flex: none; border-bottom: 1px solid #dde0e6; display: flex; align-items: center; justify-content: space-between; padding: 0 4px 2px 10px; }
.tools { display: flex; gap: 4px; padding-top: 2px; }
.tools i { width: 26px; height: 24px; border: 1px solid #cfd4de; border-radius: 4px; display: flex; align-items: center; justify-content: center; }
.tools svg { width: 18px; height: 18px; }
.tree { padding-top: 1px; font-size: 13px; letter-spacing: .14px; }
.row { height: 24px; display: flex; align-items: center; gap: 5px; }
.tw { width: 10px; height: 10px; margin-right: 2px; color: #111; }
.ic { width: 16px; height: 16px; flex: none; }
.row .tw { flex: none; }
.row .d0 .ic { margin-right: 0; }
.d0 { padding-left: 12px; background: linear-gradient(#e3ebf4, #e3ebf4) 2px 0 / 1px 100% no-repeat; }
.g1 { background: linear-gradient(#e3ebf4, #e3ebf4) 16px 0 / 1px 100% no-repeat; }
.d1 { padding-left: 26px; }
.d2 { padding-left: 42px; background: linear-gradient(#e3ebf4, #e3ebf4) 32px 0 / 1px 100% no-repeat; }
.d3 { padding-left: 58px; background: linear-gradient(#e3ebf4, #e3ebf4) 32px 0 / 1px 100% no-repeat, linear-gradient(#e3ebf4, #e3ebf4) 48px 0 / 1px 100% no-repeat; }
.sel { background: #d6effc; box-shadow: 0 -1px #d6effc, 0 1px #d6effc; }

.content { flex: 1; min-width: 0; display: flex; flex-direction: column; border-left: 1px solid #dde0e6; background: #e9ecf4; }
.tabs { height: 32px; flex: none; background: #fff; border-bottom: 1px solid #dde0e6; display: flex; align-items: center; padding: 0 11px 2px 0; }
.tabs span { padding: 0 10px; }
.tabs span:first-child { padding-left: 9.500px; }
.tabs .on { color: #326690; }
.close { width: 11px; height: 11px; margin-left: auto; color: #111; }
.scroller { flex: 1; min-height: 0; display: flex; overflow: hidden; }
.dash { flex: 1; min-width: 0; padding: 8px 9px 0 8px; }
.cards { display: grid; gap: 16px; margin-bottom: 8px; padding-left: 1px; }
.two { grid-template-columns: 1fr 1fr; }
.three { grid-template-columns: 1fr 1fr 1fr; }
.card { height: 196px; border: 1px solid #dde0e6; border-radius: 4px; background: #fff; display: flex; flex-direction: column; overflow: hidden; }
.card-head { height: 29px; flex: none; border-bottom: 1px solid #dde0e6; display: flex; align-items: center; justify-content: space-between; padding: 0 7px; }
.three .card-head { padding-bottom: 2px; }
.card-head b { letter-spacing: .12px; }
.legend { display: flex; align-items: center; font-size: 13px; letter-spacing: .15px; }
.legend i { width: 13px; height: 15px; margin: 0 4px 0 5px; }
.c1 { background: #00bcd4; } .c2 { background: #9ccc65; } .c3 { background: #e64a19; }
.chart { width: 100%; height: 165px; flex: none; }
.three .chart { margin-top: -1px; }
.axis { font-size: 13px; letter-spacing: 0; fill: #333; }
.activity { border: 1px solid #dde0e6; height: 400px; margin-top: -1px; }
.act-title { height: 29px; background: #fff; border-bottom: 1px solid #dde0e6; }
.act-tabs { height: 31px; background: #fff; border-bottom: 1px solid #dde0e6; display: flex; justify-content: flex-end; }
.refresh { width: 34px; height: 30px; border: 1px solid #dde0e6; border-radius: 4px; display: flex; align-items: center; justify-content: center; }
.refresh svg { width: 17px; height: 15px; }
.grid-box { margin: 8px 7px 0 8px; background: #fff; overflow: hidden; }
.search-row { height: 50px; border-bottom: 1px solid #d3d7df; display: flex; justify-content: flex-end; padding: 8px 8px 0 0; }
.search { width: 300px; height: 32px; border: 1px solid #dde0e6; border-radius: 4px; color: #a5a5a5; line-height: 31px; padding-left: 11px; letter-spacing: .3px; }
.tr { display: grid; grid-template-columns: 35px 35px 35px 60px 80px 60px 150px 150px 150px 150px 40px 60px; height: 35px; }
.tr i { border-right: 1px solid #dde0e6; border-bottom: 1px solid #dde0e6; padding-left: 4.500px; line-height: 29px; white-space: nowrap; overflow: hidden; letter-spacing: .13px; }
.th { height: 38px; }
.tr.th i { font-weight: 600; line-height: 35px; letter-spacing: .02px; }
.tr .kill { padding: 8px 0 0 9.500px; line-height: 0; }
.kill svg { width: 16px; height: 16px; }
.tr .stop { background: linear-gradient(#222, #222) 12.500px 12px / 10px 10px no-repeat; }
.tr .play { background: linear-gradient(to top right, #222 50%, transparent 50%) 15px 11px / 6px 6px no-repeat, linear-gradient(to bottom right, #222 50%, transparent 50%) 15px 17px / 6px 5px no-repeat; }
.track { width: 16px; flex: none; background: #e0e3ea; padding: 4px 4px 0; }
.thumb { height: 623px; border-radius: 4px; background: #c3cad6; }
.shade { position: absolute; left: 0; right: 0; bottom: 0; height: 42px; background: linear-gradient(rgba(0,0,0,0), rgba(0,0,0,.1)); }

.halo { position: absolute; left: 370px; top: 112px; width: 700px; height: 550px; border-radius: 5px; box-shadow: 0 12px 46px rgba(130,140,165,.9), 0 6px 30px rgba(120,128,150,.3); clip-path: inset(-27px -80px -100px -80px); }
.dialog { position: absolute; left: 370px; top: 112px; width: 700px; height: 550px; border-radius: 5px; background: #e9ecf4; display: flex; flex-direction: column; overflow: hidden; box-shadow: 0 0 0 1px rgba(200,205,215,.7); }
.dlg-head { height: 32px; flex: none; background: #fff; border-bottom: 1px solid #dde0e6; display: flex; align-items: center; padding: 0 11px 1px 12px; color: #111; }
.dlg-head .ic { margin-right: 2px; }
.dlg-head b { letter-spacing: .05px; }
.max { width: 13px; height: 13px; margin-left: auto; margin-right: 12px; }
.x { width: 11px; height: 11px; }
.dlg-tabs { height: 32px; flex: none; background: #fff; border-bottom: 1px solid #dde0e6; display: flex; letter-spacing: .4px; }
.dlg-tabs span { padding: 0 10px; line-height: 31px; }
.dlg-tabs .on { box-shadow: inset 0 -3px #326690; }
.form { flex: 1; padding: 7px 8px 0 14px; display: grid; grid-template-columns: 165px 1fr; grid-template-rows: 43px 43px 88px; align-content: start; }
.form label { padding-top: 4px; letter-spacing: .15px; }
.form .first { padding-top: 5px; }
.input { background: #fff; border: 1px solid #dde0e6; border-radius: 4px; height: 32px; display: flex; align-items: center; padding-left: 11px; }
.input.focus { border: 2px solid #326690; padding-left: 10px; }
.caret { width: 1px; height: 17px; background: #222; }
.select { padding-bottom: 2px; }
.select .ic { margin: 0 4px 0 3px; }
.arrow { width: 13px; height: 12px; margin-left: auto; margin-right: 8px; }
.select span { flex: 1; height: 14px; line-height: 14px; border-right: 1px solid #ccc; margin-right: 7px; }
.area { height: 88px; align-items: flex-end; justify-content: flex-end; }
.grip { width: 8px; height: 8px; }
.dlg-foot { height: 52px; flex: none; background: #fff; border-top: 1px solid #dde0e6; display: flex; align-items: center; padding: 0 8px 2px; letter-spacing: .35px; }
.sq { width: 38px; height: 32px; border: 1px solid #c5cbd8; border-radius: 4px; display: flex; align-items: center; justify-content: center; margin-right: 8px; }
.sq svg { width: 20px; height: 20px; }
.btn { height: 33px; width: 75px; border: 1px solid #c5cbd8; border-radius: 4px; display: flex; align-items: center; justify-content: center; gap: 8px; margin-left: 8px; margin-top: 1px; padding-top: 1px; }
.btn.first { margin-left: auto; }
.btn.reset { gap: 6px; padding-right: 2px; }
.btn.save { width: 78px; height: 35px; background: #326690; border-color: #326690; color: #fff; gap: 6px; padding-right: 2px; }

.dock { position: absolute; left: 38px; top: 839px; width: 1364px; height: 56px; border-radius: 15px; padding: 0 2.500px; display: flex; border: 1px solid rgba(255,255,255,.25); border-width: 0 0 1px; background: linear-gradient(90deg, #9ce5e7 0, #74d6dc 110px, #83cfd6 180px, #aacfda 270px, #b5ced8 500px, #b4d6dc 840px, #93d1c6 960px, #9addd0 1060px, #a5dfd0 1200px, #a4e8d2 1364px); }
.app { width: 47px; flex: none; position: relative; padding: 8px 0 0 5.900px; }
.app > svg { width: 36px; height: 36px; overflow: visible; display: block; }
.run::after { content: ""; position: absolute; left: 21.500px; bottom: 2px; width: 4px; height: 4px; border-radius: 50%; background: #315f68; }
.badge { position: absolute; left: 30px; top: 4px; width: 17px; height: 17px; border-radius: 50%; background: #fb4a42; color: #fff; font: 10px/17px Inter, sans-serif; letter-spacing: 0; text-align: center; }
.ring { top: 31px; left: 28px; background: #fff; border: 1.500px solid #4f8fee; color: #222; line-height: 14px; }
.sep { width: 21px; flex: none; background: linear-gradient(#86a2ab, #86a2ab) 10.500px 7px / 1px 42px no-repeat; }
.fz { font: italic 800 34px Inter, sans-serif; fill: #fff; letter-spacing: -5px; }
.jb { font: 700 13px Inter, sans-serif; fill: #fff; letter-spacing: 0; }
.app.mini { padding: 14px 0 0 3px; }
.mini > svg { position: absolute; left: 29px; top: 32px; width: 15px; height: 15px; }
.thumbnail { display: block; width: 41px; height: 24px; background: #f7f9f9; }
.code { background: linear-gradient(90deg, rgba(58,60,62,.6) 9px, transparent 9px 28px, #323436 28px), repeating-linear-gradient(#313335 0 2px, #484b4d 2px 3px); height: 27px; margin-top: -1px; }
.navy { background: linear-gradient(90deg, rgba(31,44,54,.7) 9px, transparent 9px 28px, #1f2d37 28px), repeating-linear-gradient(#1f2c36 0 2px, #2b3c47 2px 3px); height: 25px; margin-top: 0; }
.list { background: linear-gradient(90deg, #eef1f1 8px, transparent 8px), repeating-linear-gradient(#fcfdfd 0 2px, #dde1e2 2px 3px); margin-top: 2px; height: 20px; }
.bluefoot { border-bottom: 2px solid #3b6fd8; }
.slide { background: linear-gradient(#333, #333) 14px 18px / 15px 2px no-repeat, linear-gradient(#999, #999) 4px 8px / 10px 1px no-repeat, linear-gradient(#e8ecf5, #e8ecf5) 30px 0 / 11px 22px no-repeat, #fff; border-bottom: 2px solid #000; border-top: 1.500px solid #000; }
.dots { background: linear-gradient(#3aa5f5, #3aa5f5) 23px 11px / 3px 4px no-repeat, linear-gradient(#f7fafa, #f7fafa) 0 0 / 10px 100% no-repeat, radial-gradient(#dce1e3 1.200px, transparent 1.600px) 8px 3px / 6px 7px, #f7fafa; height: 18px; margin-top: 3px; }
.yellow { border-top: 2px solid #f2cf3c; height: 24px; margin-top: 0; }
.doc { background: linear-gradient(90deg, #999 7px, transparent 7px 34px, #999 34px), repeating-linear-gradient(#fff 0 2px, #e2e2e2 2px 3px); }
.app > .trash { width: 34px; height: 42px; margin: -4px 0 0 1px; }
```
